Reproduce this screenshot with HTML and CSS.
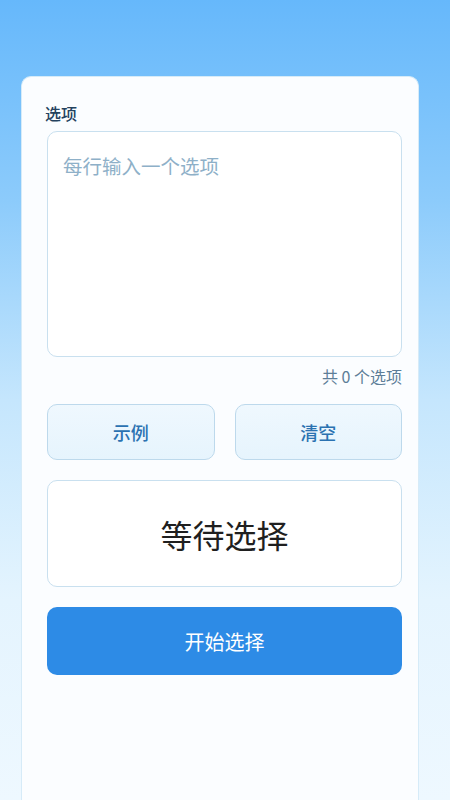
FILE: index.html
```html
<!DOCTYPE html>
<html lang="zh">
<head>
<meta charset="utf-8">
<title>选择</title>
<link rel="stylesheet" href="styles.css">
</head>
<body>
<main class="page">
  <section class="card">
    <label class="label" for="opts">选项</label>
    <textarea id="opts" class="options" placeholder="每行输入一个选项"></textarea>
    <div class="count">共 0 个选项</div>
    <div class="actions">
      <button class="btn-light">示例</button>
      <button class="btn-light">清空</button>
    </div>
    <div class="result">等待选择</div>
    <button class="btn-start">开始选择</button>
  </section>
</main>
</body>
</html>
```
FILE: styles.css
```css
* { box-sizing: border-box; }
html, body { margin: 0; padding: 0; }
body {
  width: 450px;
  height: 800px;
  overflow: hidden;
  font-family: "Noto Sans CJK SC", "Noto Sans", sans-serif;
  background: linear-gradient(180deg, #66b8fb 0%, #8ccbfb 25%, #c5e6fd 50%, #e4f4fe 75%, #eef8ff 100%);
}
.page {
  padding: 76px 31px 0 21px;
  height: 800px;
}
.card {
  height: 724px;
  background: #fbfdff;
  border: 1px solid #d6ebf8;
  border-bottom: none;
  border-radius: 10px 10px 0 0;
  padding: 24px 16px 0 25px;
  display: flex;
  flex-direction: column;
}
.label {
  font-size: 16px;
  font-weight: 500;
  color: #24425e;
  line-height: 24px;
  margin-left: -2px;
}
.options {
  margin-top: 6px;
  height: 226px;
  resize: none;
  border: 1px solid #c9e0ef;
  border-radius: 10px;
  background: #ffffff;
  padding: 19px 15px;
  font-family: inherit;
  font-size: 19.5px;
  color: #333;
  outline: none;
}
.options::placeholder { color: #8eb0c8; }
.count {
  text-align: right;
  font-size: 16px;
  color: #5d7e98;
  margin-top: 8px;
  line-height: 22px;
}
.actions {
  margin-top: 17px;
  display: grid;
  grid-template-columns: 1fr 1fr;
  gap: 20px;
}
.btn-light {
  height: 56px;
  border: 1px solid #bdd9ec;
  border-radius: 10px;
  background: linear-gradient(180deg, #eff8fe, #e6f4fd);
  color: #2b72b1;
  font-family: inherit;
  font-size: 18px;
  font-weight: 500;
}
.result {
  margin-top: 20px;
  height: 107px;
  border: 1px solid #c9e0ef;
  border-radius: 10px;
  background: #ffffff;
  display: flex;
  align-items: center;
  justify-content: center;
  font-size: 32px;
  color: #1f1f1f;
}
.btn-start {
  margin-top: 20px;
  height: 68px;
  border: none;
  border-radius: 10px;
  background: #2d8be6;
  color: #ffffff;
  font-family: inherit;
  font-size: 20px;
  font-weight: 400;
}
```
